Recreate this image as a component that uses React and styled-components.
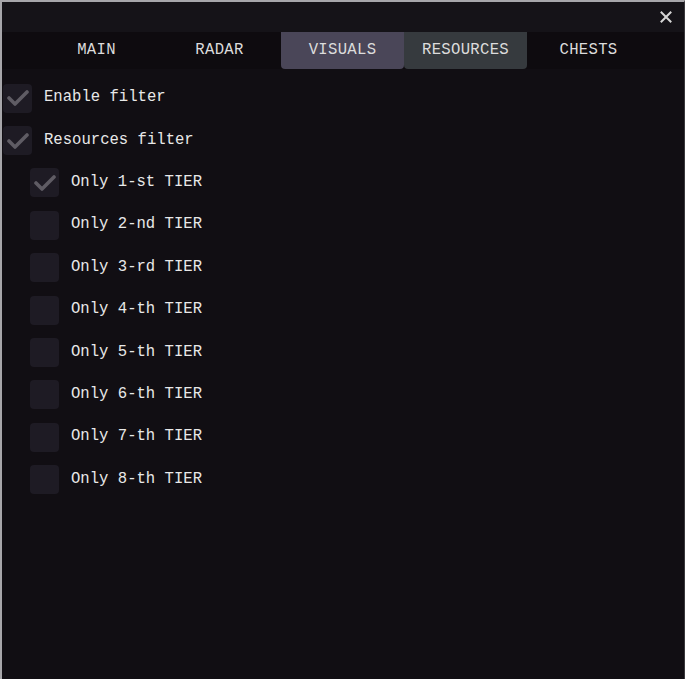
import React, { useState } from 'react';
import styled, { createGlobalStyle } from 'styled-components';

const Global = createGlobalStyle`
	html, body {
		margin: 0;
		padding: 0;
		background: #110e13;
	}
	* {
		box-sizing: border-box;
	}
`;

const Window = styled.div`
	width: 685px;
	height: 679px;
	display: flex;
	flex-direction: column;
	background: #110e13;
	border-top: 2px solid #a7a6aa;
	border-left: 2px solid #a7a6aa;
	border-right: 1px solid #3a383c;
	font-family: 'Liberation Mono', 'DejaVu Sans Mono', monospace;
	font-size: 15.6px;
	color: #e8e8e8;
	overflow: hidden;
`;

const TitleBar = styled.div`
	height: 30px;
	background: #151318;
	display: flex;
	justify-content: flex-end;
	align-items: center;
	padding-right: 10px;
`;

const Close = styled.button`
	width: 16px;
	height: 16px;
	padding: 0;
	border: none;
	background: none;
	display: flex;
	align-items: center;
	justify-content: center;
	cursor: pointer;
`;

const TabBar = styled.div`
	height: 37px;
	background: #0e0b0f;
	display: grid;
	grid-template-columns: repeat(5, 123px);
	padding-left: 33px;
`;

const Tab = styled.div`
	display: flex;
	align-items: center;
	justify-content: center;
	padding-bottom: 2px;
	border-radius: ${({ active }) => (active ? '0 0 4px 4px' : '0')};
	background: ${({ active }) => active || 'transparent'};
	color: #dcdcdc;
	letter-spacing: 0.3px;
	cursor: pointer;
`;

const Content = styled.div`
	flex: 1;
	display: flex;
	flex-direction: column;
	padding-top: 8px;
	padding-left: 1px;
`;

const Row = styled.label`
	height: 42.4px;
	display: flex;
	align-items: center;
	gap: 12px;
	padding-left: ${({ level }) => (level ? 27 : 0)}px;
	cursor: pointer;
`;

const Box = styled.span`
	width: 29px;
	height: 29px;
	border-radius: 4px;
	background: #1e1b24;
	display: flex;
	align-items: center;
	justify-content: center;
	flex-shrink: 0;
`;

const Label = styled.span`
	white-space: pre;
	padding-bottom: 2px;
`;

const tabs = [
	{ name: 'MAIN' },
	{ name: 'RADAR' },
	{ name: 'VISUALS', bg: '#4a4658' },
	{ name: 'RESOURCES', bg: '#363a3e' },
	{ name: 'CHESTS' },
];

const initial = [
	{ label: 'Enable filter', level: 0, on: true },
	{ label: 'Resources filter', level: 0, on: true },
	{ label: 'Only 1-st TIER', level: 1, on: true },
	{ label: 'Only 2-nd TIER', level: 1, on: false },
	{ label: 'Only 3-rd TIER', level: 1, on: false },
	{ label: 'Only 4-th TIER', level: 1, on: false },
	{ label: 'Only 5-th TIER', level: 1, on: false },
	{ label: 'Only 6-th TIER', level: 1, on: false },
	{ label: 'Only 7-th TIER', level: 1, on: false },
	{ label: 'Only 8-th TIER', level: 1, on: false },
];

const Check = () => (
	<svg width="22" height="18" viewBox="0 0 22 18">
		<path d="M2 9 L8 15 L20 3" fill="none" stroke="#5f5c64" strokeWidth="3.6" strokeLinecap="round" strokeLinejoin="round" />
	</svg>
);

const App = () => {
	const [items, setItems] = useState(initial);
	const toggle = (i) => {
		setItems(items.map((it, idx) => (idx === i ? { ...it, on: !it.on } : it)));
	};
	return (
		<>
			<Global />
			<Window>
				<TitleBar>
					<Close>
						<svg width="12" height="12" viewBox="0 0 12 12">
							<path d="M1.5 1.5 L10.5 10.5 M10.5 1.5 L1.5 10.5" stroke="#d6d6d6" strokeWidth="2" strokeLinecap="square" />
						</svg>
					</Close>
				</TitleBar>
				<TabBar>
					{tabs.map((t) => (
						<Tab key={t.name} active={t.bg}>
							{t.name}
						</Tab>
					))}
				</TabBar>
				<Content>
					{items.map((it, i) => (
						<Row key={it.label} level={it.level} onClick={() => toggle(i)}>
							<Box>{it.on && <Check />}</Box>
							<Label>{it.label}</Label>
						</Row>
					))}
				</Content>
			</Window>
		</>
	);
};

export default App;
